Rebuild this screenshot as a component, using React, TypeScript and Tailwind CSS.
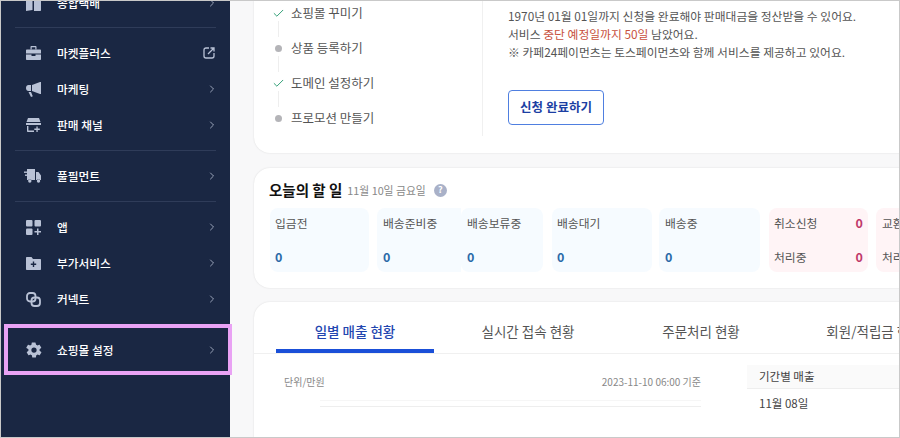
import { Check, ChevronRight } from 'lucide-react';

const FONT = "font-['Noto_Sans_CJK_KR','Noto_Sans',sans-serif]";

const DocIcon = () => (
  <svg width="15" height="15" viewBox="0 0 15 15" fill="#b9c2d6">
    <path d="M0 3l6.500-2v13L0 15z" />
    <path d="M8 0h6c.6 0 1 .4 1 1v13c0 .6-.4 1-1 1H8z" />
  </svg>
);

const BriefcaseIcon = () => (
  <svg width="15" height="14" viewBox="0 0 15 14" fill="#b9c2d6">
    <path d="M4.500 3.500V1c0-.6.4-1 1-1h4c.6 0 1 .4 1 1v2.500H9.300V1.300H5.700v2.200z" />
    <path d="M1 3.500h13c.6 0 1 .4 1 1V7.500H0v-3c0-.6.4-1 1-1zM0 8.500h5.500v1.500h4V8.500H15V13c0 .6-.4 1-1 1H1c-.6 0-1-.4-1-1z" />
  </svg>
);

const MegaphoneIcon = () => (
  <svg width="15" height="15" viewBox="0 0 15 15" fill="#b9c2d6">
    <path d="M14 0h1v12h-1L6 9V3z" />
    <path d="M5 3v6H2.500C1.100 9 0 7.700 0 6s1.100-3 2.500-3z" />
    <path d="M2.500 10H5l1.800 4.200-1.800.7z" />
  </svg>
);

const StoreIcon = () => (
  <svg width="15" height="14" viewBox="0 0 15 14" fill="#b9c2d6">
    <path d="M2 0h11l1.500 4H.500z" />
    <rect x="0" y="5" width="15" height="2" />
    <path d="M1 8h1.400v4.400H8V14H2c-.6 0-1-.4-1-1z" />
    <path d="M10.400 8.500h1.300v2.100h2.100v1.300h-2.100V14h-1.300v-2.100H8.300v-1.300h2.100z" />
  </svg>
);

const TruckIcon = () => (
  <svg className="ml-[-2px]" width="17" height="14" viewBox="0 0 17 14" fill="#b9c2d6">
    <path d="M3 0h8v11H7.500a2.200 2.200 0 0 0-3.500 0H3z" />
    <rect x="0" y="2.500" width="5" height="1.400" />
    <rect x="1" y="5.500" width="4" height="1.400" />
    <path d="M12 3h2.500L17 6.500V11h-.8a2.200 2.200 0 0 0-3.500 0H12z" />
    <circle cx="5.800" cy="12" r="1.700" />
    <circle cx="14.500" cy="12" r="1.700" />
  </svg>
);

const AppsIcon = () => (
  <svg width="15" height="15" viewBox="0 0 15 15" fill="#b9c2d6">
    <rect x="0" y="0" width="6.500" height="6.500" rx="1" />
    <rect x="8.500" y="0" width="6.500" height="6.500" rx="1" />
    <rect x="0" y="8.500" width="6.500" height="6.500" rx="1" />
    <path d="M11 8.500h1.500V11H15v1.500h-2.500V15H11v-2.500H8.500V11H11z" />
  </svg>
);

const FolderIcon = () => (
  <svg width="15" height="13" viewBox="0 0 15 13">
    <path fill="#b9c2d6" d="M1 0h4.500L7 2h7c.6 0 1 .4 1 1v9c0 .6-.4 1-1 1H1c-.6 0-1-.4-1-1V1c0-.6.4-1 1-1z" />
    <path fill="#1a2743" d="M6.800 4.500h1.400v2h2v1.400h-2v2H6.800v-2h-2V6.500h2z" />
  </svg>
);

const LinkIcon = () => (
  <svg width="15" height="15" viewBox="0 0 15 15" fill="none" stroke="#b9c2d6" strokeWidth="1.800">
    <rect x="1" y="1" width="8.500" height="8.500" rx="3" />
    <rect x="5.500" y="5.500" width="8.500" height="8.500" rx="3" />
  </svg>
);

const GearIcon = () => (
  <svg className="ml-[-1.500px]" width="18" height="18" viewBox="0 0 24 24">
    <path
      fill="#b9c2d6"
      d="M19.400 13c.1-.3.100-.7.100-1s0-.7-.1-1l2.100-1.600c.2-.2.200-.4.100-.6l-2-3.500c-.1-.2-.4-.3-.6-.2l-2.500 1c-.5-.4-1.100-.7-1.700-1L14 2.400c0-.2-.2-.4-.5-.4h-4c-.2 0-.4.200-.5.400l-.4 2.700c-.6.200-1.100.6-1.700 1l-2.500-1c-.2-.1-.5 0-.6.200l-2 3.500c-.1.200-.1.400.1.600L4.600 11c0 .3-.1.700-.1 1s0 .7.100 1l-2.100 1.600c-.2.200-.2.400-.1.600l2 3.500c.1.200.4.300.6.200l2.500-1c.5.400 1.100.7 1.700 1l.4 2.700c0 .2.200.4.500.4h4c.2 0 .4-.2.500-.4l.4-2.700c.6-.2 1.100-.6 1.700-1l2.500 1c.2.100.5 0 .6-.2l2-3.500c.1-.2.100-.4-.1-.6zM12 15.500a3.500 3.500 0 1 1 0-7 3.500 3.500 0 0 1 0 7z"
    />
  </svg>
);

const ExternalIcon = () => (
  <svg className="mr-[3px]" width="12" height="12" viewBox="0 0 12 12" fill="none" stroke="#b9c2d6" strokeWidth="1.300">
    <path d="M6 1H3C1.800 1 1 1.800 1 3v6c0 1.200.8 2 2 2h6c1.200 0 2-.8 2-2V6" />
    <path d="M5 7l6-6M7.500 1H11v3.500" />
  </svg>
);

const NavItem = ({ icon, label, external }: { icon?: React.ReactNode; label: string; external?: boolean }) => (
  <div className="flex h-9 items-center pl-[25px] pr-[12px]">
    <div className="flex w-[31px] items-center">{icon}</div>
    <span className="flex-1 text-[11.700px] font-medium text-white">{label}</span>
    {external ? <ExternalIcon /> : <ChevronRight size={12} color="#b9c2d6" strokeWidth={1.6} />}
  </div>
);

const Divider = () => <div className="mx-[14px] h-px bg-[#2f3c59]" />;

const Sidebar = () => (
  <aside className="w-[229px] shrink-0 bg-[#1a2743]">
    <div className="mt-[-16px]">
      <NavItem icon={<DocIcon />} label="종합택배" />
    </div>
    <div className="mt-[6px]">
      <Divider />
    </div>
    <div className="mb-[7px] mt-[7px]">
      <NavItem icon={<BriefcaseIcon />} label="마켓플러스" external />
      <NavItem icon={<MegaphoneIcon />} label="마케팅" />
      <NavItem icon={<StoreIcon />} label="판매 채널" />
    </div>
    <Divider />
    <div className="mb-[7px] mt-[7px]">
      <NavItem icon={<TruckIcon />} label="풀필먼트" />
    </div>
    <Divider />
    <div className="mt-[7px]">
      <NavItem icon={<AppsIcon />} label="앱" />
      <NavItem icon={<FolderIcon />} label="부가서비스" />
      <NavItem icon={<LinkIcon />} label="커넥트" />
    </div>
    <div className="mt-[15px]">
      <NavItem icon={<GearIcon />} label="쇼핑몰 설정" />
    </div>
  </aside>
);

const steps = [
  { label: '쇼핑몰 꾸미기', done: true },
  { label: '상품 등록하기', done: false },
  { label: '도메인 설정하기', done: true },
  { label: '프로모션 만들기', done: false },
];

const StepList = () => (
  <div className="mt-[-4px] w-[228px] pl-[18px]">
    {steps.map((step, i) => (
      <div key={step.label} className="relative flex h-[35px] items-center">
        <div className="flex w-[19px] justify-start">
          {step.done ? (
            <Check size={13} color="#2f9e75" strokeWidth={1.8} />
          ) : (
            <div className="ml-[3px] h-[7px] w-[7px] rounded-full bg-[#b4b4b8]" />
          )}
        </div>
        <span className="text-[12.500px] text-[#555]">{step.label}</span>
        {i < 3 && <div className="absolute left-[6px] top-[25px] h-[16px] w-px bg-[#eeeeee]" />}
      </div>
    ))}
  </div>
);

const Tile = ({ label, className }: { label: string; className: string }) => (
  <div className={`flex h-16 shrink-0 flex-col justify-between bg-[#f6fbff] pb-[5px] pt-[6px] ${className}`}>
    <span className="text-[11.800px] text-[#555]">{label}</span>
    <span className="text-[12.500px] font-semibold text-[#2a6aa8]">0</span>
  </div>
);

const PinkTile = ({ top, bottom, className }: { top: string; bottom: string; className: string }) => (
  <div className={`flex h-16 shrink-0 flex-col justify-between rounded-lg bg-[#fff4f6] pb-[5px] pr-[5px] pt-[6px] ${className}`}>
    <div className="flex justify-between text-[11.800px] text-[#555]">
      <span>{top}</span>
      <span className="text-[12.500px] font-semibold text-[#c0396a]">0</span>
    </div>
    <div className="flex justify-between text-[11.800px] text-[#555]">
      <span>{bottom}</span>
      <span className="text-[12.500px] font-semibold text-[#c0396a]">0</span>
    </div>
  </div>
);

const tabs = ['일별 매출 현황', '실시간 접속 현황', '주문처리 현황', '회원/적립금 현황'];

export default function App() {
  return (
    <div className={`relative flex h-[438px] w-[900px] overflow-hidden border border-[#c9c9c9] bg-[#f8f8f9] ${FONT}`}>
      <Sidebar />

      <main className="min-w-0 flex-1 pl-[24px]">
        <section className="mt-[-1px] flex h-[153px] w-[700px] rounded-b-2xl bg-white shadow-[0_0_2px_rgba(0,0,0,0.12)]">
          <StepList />
          <div className="h-[136px] w-px bg-[#f0f0f0]" />
          <div className="pl-[25px] pt-[7px]">
            <p className="text-[11.800px] leading-[18px] text-[#555]">1970년 01월 01일까지 신청을 완료해야 판매대금을 정산받을 수 있어요.</p>
            <p className="text-[11.800px] leading-[18px] text-[#555]">
              서비스 <span className="text-[#c8503c]">중단 예정일까지 50일</span> 남았어요.
            </p>
            <p className="text-[11.800px] leading-[18px] text-[#555]">※ 카페24페이먼츠는 토스페이먼츠와 함께 서비스를 제공하고 있어요.</p>
            <button className="mt-[29px] h-[35px] w-[96px] rounded border-[1.5px] border-[#4f7fe0] bg-white text-[12.500px] font-semibold text-[#1c3fa3]">
              신청 완료하기
            </button>
          </div>
        </section>

        <section className="mt-[15px] h-[120px] w-[700px] rounded-2xl bg-white pl-[15px] pt-[12px] shadow-[0_0_2px_rgba(0,0,0,0.12)]">
          <div className="flex h-[20px] items-center">
            <h2 className="text-[14.500px] font-bold text-[#111]">오늘의 할 일</h2>
            <span className="ml-[5px] text-[10.800px] text-[#888]">11월 10일 금요일</span>
            <span className="ml-[8px] flex h-[13px] w-[13px] items-center justify-center rounded-full bg-[#a9b1c8] text-[9px] font-bold text-white">?</span>
          </div>
          <div className="ml-px mt-[8px] flex">
            <Tile label="입금전" className="w-[99px] rounded-lg pl-[5px]" />
            <Tile label="배송준비중" className="ml-[8px] w-[84px] rounded-l-lg pl-[6px]" />
            <Tile label="배송보류중" className="w-[82px] rounded-lg pl-[6px]" />
            <Tile label="배송대기" className="ml-[9px] w-[100px] rounded-lg pl-[5px]" />
            <Tile label="배송중" className="ml-[7px] w-[101px] rounded-lg pl-[6px]" />
            <PinkTile top="취소신청" bottom="처리중" className="ml-[9px] w-[99px] pl-[5px]" />
            <PinkTile top="교환신청" bottom="처리중" className="ml-[8px] w-[99px] pl-[6px]" />
          </div>
        </section>

        <section className="mt-[14px] h-[160px] w-[700px] rounded-t-2xl bg-white pt-[13px] shadow-[0_0_2px_rgba(0,0,0,0.12)]">
          <div className="flex gap-[15px] border-b border-[#f0f0f0] pl-[22px]">
            {tabs.map((tab, i) => (
              <div
                key={tab}
                className={
                  i === 0
                    ? 'mb-[-1px] flex h-[38px] w-[158px] shrink-0 items-center justify-center border-b-4 border-[#1a4fd8] pb-[2px] text-[13.500px] font-medium text-[#2346b0]'
                    : 'flex h-[38px] w-[158px] shrink-0 items-center justify-center pb-[6px] text-[13.500px] text-[#555]'
                }
              >
                {tab}
              </div>
            ))}
          </div>
          <div className="flex pt-[11px]">
            <div className="w-[493px] shrink-0 pl-[30px]">
              <div className="flex items-center justify-between pt-[9px] text-[10px] text-[#888]">
                <span>단위/만원</span>
                <span className="mr-[46px]">2023-11-10 06:00 기준</span>
              </div>
              <div className="ml-[36px] mr-[46px] mt-[11px] h-px bg-[#f6f6f6]" />
              <div className="ml-[36px] mr-[46px] mt-[5px] h-px bg-[#eeeeee]" />
            </div>
            <div className="flex-1">
              <div className="flex h-6 items-center border-b border-[#eeeeee] bg-[#fafafa] pl-[12px] text-[11.500px] text-[#444]">기간별 매출</div>
              <div className="pl-[12px] pt-[6px] text-[11.500px] text-[#444]">11월 08일</div>
            </div>
          </div>
        </section>
      </main>

      {/* 스크린샷 위에 얹은 강조 표시 */}
      <div className="absolute left-[3px] top-[323px] h-[51px] w-[228px] border-4 border-[#e9a2f4]" />
    </div>
  );
}
